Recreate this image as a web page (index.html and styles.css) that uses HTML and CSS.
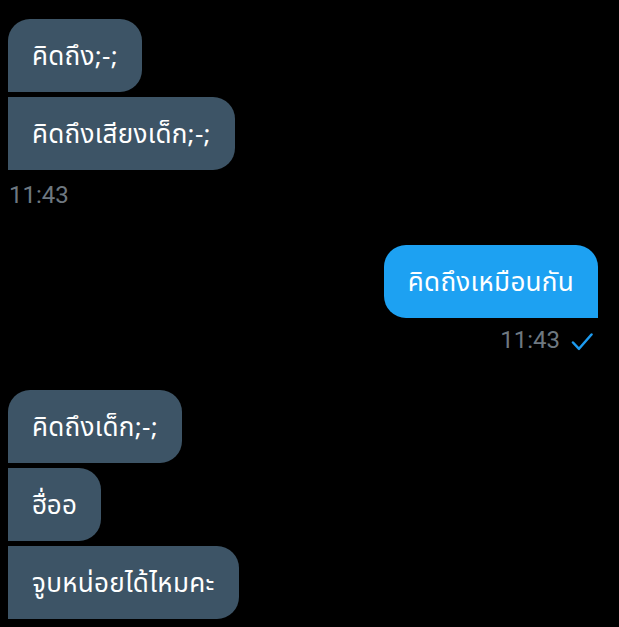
FILE: index.html
```html
<!DOCTYPE html>
<html lang="th">
<head>
<meta charset="utf-8">
<link rel="stylesheet" href="styles.css">
</head>
<body>
<div class="chat">
  <div class="group in">
    <div class="bubble first">คิดถึง;-;</div>
    <div class="bubble">คิดถึงเสียงเด็ก;-;</div>
    <div class="time">11:43</div>
  </div>
  <div class="group out">
    <div class="bubble">คิดถึงเหมือนกัน</div>
    <div class="meta">
      <span class="time">11:43</span>
      <svg class="check" width="22" height="18" viewBox="0 0 22 18"><path d="M2 9.5 L8 15.8 L20.5 1.5" fill="none" stroke="#1d9bf0" stroke-width="2.5" stroke-linecap="round" stroke-linejoin="round"/></svg>
    </div>
  </div>
  <div class="group in">
    <div class="bubble first">คิดถึงเด็ก;-;</div>
    <div class="bubble">ฮื่ออ</div>
    <div class="bubble">จูบหน่อยได้ไหมคะ</div>
  </div>
</div>
</body>
</html>
```
FILE: styles.css
```css
html, body {
  margin: 0;
  padding: 0;
  background: #000;
}
body {
  font-family: "Noto Sans", "Noto Sans Thai", "DejaVu Sans", sans-serif;
  color: #fff;
}
.chat {
  display: flex;
  flex-direction: column;
  padding: 19px 21px 0 8px;
  gap: 37px;
}
.group {
  display: flex;
  flex-direction: column;
  gap: 5px;
}
.group.in { align-items: flex-start; }
.group.out { align-items: flex-end; }
.bubble {
  font-size: 26px;
  line-height: 33px;
  padding: 20px 24px;
  letter-spacing: 0.3px;
  border-radius: 0 22px 22px 0;
}
.in .bubble {
  background: #3d5466;
}
.in .bubble.first {
  border-radius: 22px 22px 22px 0;
}
.out .bubble {
  background: #1da1f2;
  border-radius: 22px 22px 0 22px;
}
.time {
  font-family: Roboto, "Liberation Sans", sans-serif;
  font-size: 24px;
  line-height: 26px;
  color: #6e7880;
}
.in .time { margin-top: 7px; padding-left: 1px; }
.meta {
  display: flex;
  align-items: center;
  gap: 11px;
  margin-top: 4px;
  padding-right: 5px;
}
.check { display: block; margin-top: 3px; }
```
